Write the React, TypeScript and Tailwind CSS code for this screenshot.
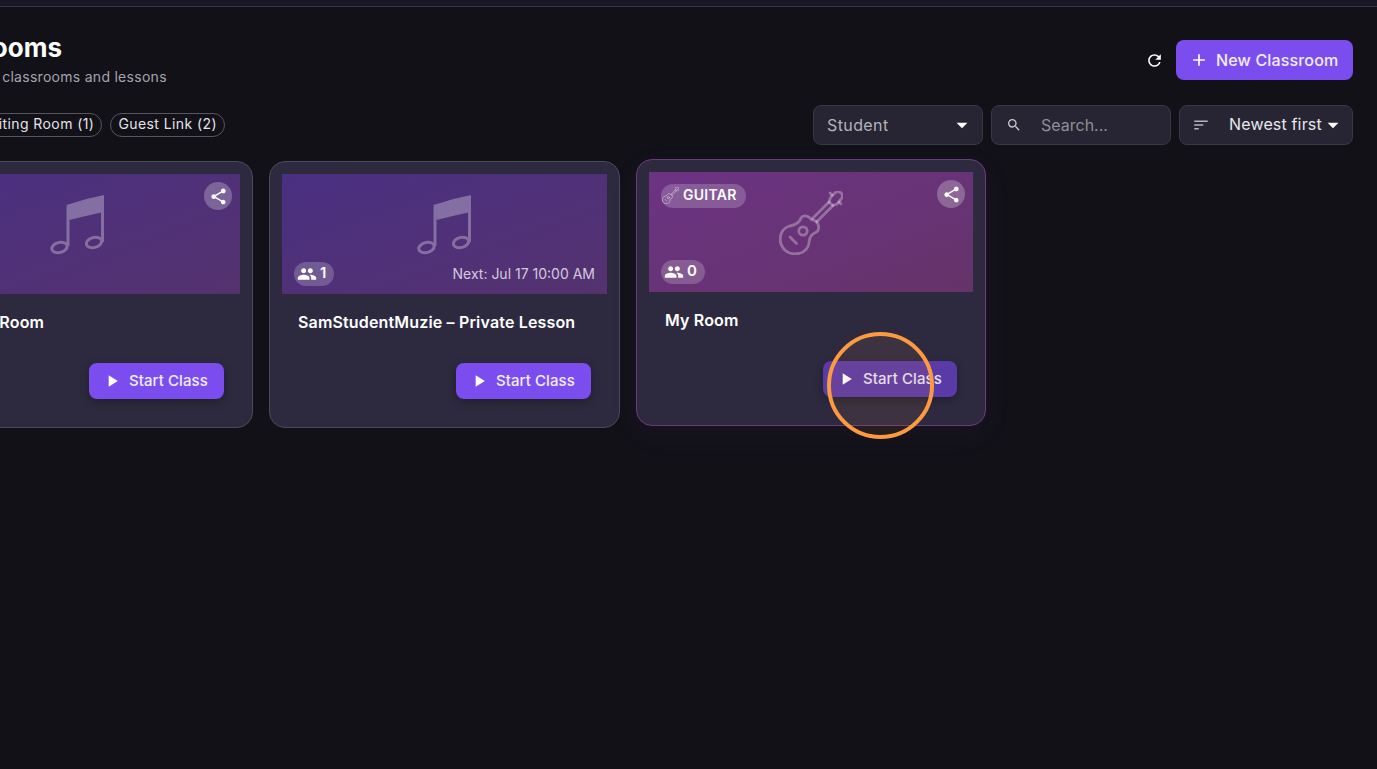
import { MdAdd, MdArrowDropDown, MdPeople, MdPlayArrow, MdRefresh, MdSearch, MdShare, MdSort } from "react-icons/md";

const font = { fontFamily: "Inter, 'Noto Sans', sans-serif" };

function MusicNote() {
  return (
    <svg width="56" height="60" viewBox="0 0 56 60" fill="none" className="text-white opacity-30">
      <path d="M16.5 10 Q35 3.6 54 0 L53.5 17 Q35 21 19.5 25 Z" fill="currentColor" />
      <path d="M18 12 V51 M52.5 2 V47" stroke="currentColor" strokeWidth="3" />
      <ellipse cx="9.5" cy="52.5" rx="7.8" ry="5" transform="rotate(-15 9.5 52.5)" stroke="currentColor" strokeWidth="3" />
      <ellipse cx="44" cy="47.5" rx="7.8" ry="5" transform="rotate(-15 44 47.5)" stroke="currentColor" strokeWidth="3" />
    </svg>
  );
}

function Guitar({ size = 64, stroke = 2.8 }: { size?: number; stroke?: number }) {
  return (
    <svg width={size} height={size} viewBox="0 0 64 64" fill="none" stroke="currentColor" strokeWidth={stroke} strokeLinejoin="round" strokeLinecap="round">
      <path d="M32.5 28.5 C29 24.5 24 23.5 22 27 C20.5 31.5 17 34 11 35 C3 37 -0.5 45 2 53 C5 61 12 64 20 62.5 C27 61 30 55 30.5 49 C31 45 34 42.5 37.5 41 C41 38.5 40 33 37 30 Z" />
      <circle cx="24" cy="40" r="4.2" />
      <path d="M11 46 L17.5 52.5" />
      <path d="M33.5 27.5 L50 11 M37.5 31 L54 14.5" />
      <path d="M50 11 L54 14.5 L58 13 L63 7 C64.5 3 61 -0.5 57 1 L51.5 6.5 Z" />
      <path d="M53 4 L51 2 M60 11 L62 13" />
    </svg>
  );
}

function Card({
  title,
  count,
  next,
  share,
  tag,
  active,
  note,
}: {
  title: string;
  count: number;
  next?: string;
  share?: boolean;
  tag?: string;
  active?: boolean;
  note?: boolean;
}) {
  return (
    <div
      className={
        active
          ? "relative -mt-[2px] mb-[2px] h-[267px] w-[350px] shrink-0 rounded-2xl border border-[#6d3a80] bg-[#2d2a3f] p-3 shadow-[0_8px_28px_rgba(120,60,160,0.08)]"
          : "relative h-[267px] w-[351px] shrink-0 rounded-2xl border border-[#4b4959] bg-[#2d2a3f] p-3"
      }
    >
      <div
        className={
          active
            ? "relative flex h-[120px] items-start justify-center bg-gradient-to-br from-[#6c3384] to-[#653369] pt-[19px] text-white/30"
            : "relative flex h-[120px] items-start justify-center bg-gradient-to-br from-[#4a2f82] to-[#55326f] pt-[21px]"
        }
      >
        {note ? <MusicNote /> : <Guitar />}
        {tag && (
          <span className="absolute left-3 top-3 flex h-6 w-[85px] items-center gap-1 rounded-full bg-white/20 pb-[2px] pl-[1px] text-sm font-semibold tracking-[0.02em] text-white">
            <span className="opacity-80">
              <Guitar size={17} stroke={2} />
            </span>
            {tag}
          </span>
        )}
        {share && (
          <span className="absolute right-2 top-2 flex h-7 w-7 items-center justify-center rounded-full bg-white/25 text-white">
            <MdShare size={19} />
          </span>
        )}
        <span className="absolute bottom-2 left-3 flex h-6 items-center gap-[3px] rounded-full bg-white/20 pb-[1px] pl-[3px] pr-2 text-[15px] font-semibold text-white">
          <MdPeople size={20} />
          {count}
        </span>
        {next && <span className="absolute bottom-[10px] right-3 text-sm leading-5 text-white/75">{next}</span>}
      </div>
      <div className="px-4 pt-[19px] text-base font-semibold leading-[18px] tracking-[0.01em] text-white">{title}</div>
      <div className="flex justify-end px-4 pt-[32px]">
        <button
          className={
            active
              ? "flex h-9 w-[134px] items-center rounded-lg bg-[#593aa6] pl-[13px] text-[15px] font-medium tracking-[0.005em] text-white/85 shadow-[0_3px_8px_rgba(0,0,0,0.3)]"
              : "flex h-9 w-[135px] items-center rounded-lg bg-[#7c4dee] pl-[13px] text-[15px] font-medium tracking-[0.005em] text-white/90 shadow-[0_3px_8px_rgba(0,0,0,0.3)]"
          }
        >
          <MdPlayArrow size={20} className="text-white" />
          <span className="ml-[7px]">Start Class</span>
        </button>
      </div>
    </div>
  );
}

export default function App() {
  return (
    <div style={font} className="relative h-[769px] w-[1377px] overflow-hidden bg-[#121118]">
      <div className="h-[7px] border-b border-[#37344a] bg-[#191727]" />
      <div className="-ml-[98px] pr-6 pt-[33px]">
        <div className="flex items-start justify-between">
          <div className="w-[160px] text-right">
            <h1 className="whitespace-nowrap text-[26px] font-bold leading-[15px] text-white">Classrooms</h1>
          </div>
          <div className="flex items-center">
            <MdRefresh size={19} className="mr-3 text-white" />
            <button className="flex h-10 w-[177px] items-center rounded-lg bg-[#7c4dee] pl-[13px] text-base font-medium tracking-[0.01em] text-white/90">
              <MdAdd size={20} className="text-white" />
              <span className="ml-[7px]">New Classroom</span>
            </button>
          </div>
        </div>
        <p className="-mt-[13px] ml-[6px] text-sm tracking-[0.02em] text-[#a5a4ad]">Manage your classrooms and lessons</p>
        <div className="mt-[18px] flex items-center justify-between">
          <div className="mb-[1px] flex w-[323px] justify-end gap-2">
            <span className="flex h-6 items-center rounded-full border border-[#57565e] pb-[1px] pl-[7px] pr-[7px] text-sm tracking-[0.03em] text-[#e4e3e8]">Waiting Room (1)</span>
            <span className="flex h-6 items-center rounded-full border border-[#57565e] pb-[1px] pl-[7px] pr-[7px] text-sm tracking-[0.03em] text-[#e4e3e8]">Guest Link (2)</span>
          </div>
          <div className="flex gap-2">
            <div className="flex h-10 w-[170px] items-center justify-between rounded-lg border border-[#393746] bg-[#272533] pl-[13px] pr-[7px] text-base tracking-[0.025em] text-[#b4b3bb]">
              Student
              <MdArrowDropDown size={26} className="text-white" />
            </div>
            <div className="flex h-10 w-[180px] items-center rounded-lg border border-[#393746] bg-[#272533] pl-[14px] text-base text-[#8f8e98]">
              <MdSearch size={16} className="text-[#c8c7ce]" />
              <span className="ml-[19px]">Search...</span>
            </div>
            <div className="flex h-10 w-[174px] items-center rounded-lg border border-[#393746] bg-[#272533] pl-3 text-base tracking-[0.01em] text-[#e8e7ec]">
              <MdSort size={18} className="text-[#b4b3bb]" />
              <span className="mb-[2px] ml-[19px]">Newest first</span>
              <MdArrowDropDown size={26} className="-ml-[2px] text-white" />
            </div>
          </div>
        </div>
        <div className="mt-4 flex gap-4">
          <Card title="Teacher Room" count={2} share note />
          <Card title="SamStudentMuzie – Private Lesson" count={1} next="Next: Jul 17 10:00 AM" note />
          <Card title="My Room" count={0} share tag="GUITAR" active />
        </div>
      </div>
      <div className="absolute left-[827px] top-[332px] h-[107px] w-[107px] rounded-full border-4 border-[#fb9a3e] bg-[#fb9a3e]/[0.08]" />
    </div>
  );
}
